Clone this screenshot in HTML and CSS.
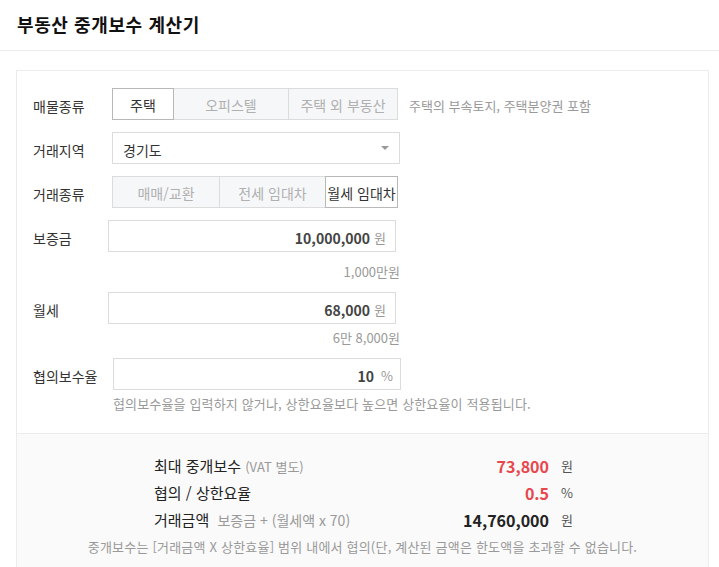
FILE: index.html
```html
<!DOCTYPE html>
<html lang="ko">
<head>
  <meta charset="UTF-8">
  <title>부동산 중개보수 계산기</title>
  <link rel="stylesheet" href="styles.css">
</head>
<body>
  <div class="header">
    <h1>부동산 중개보수 계산기</h1>
  </div>

  <div class="calc">
    <div class="form">

      <div class="row">
        <span class="label">매물종류</span>
        <div class="tabs">
          <button class="tab on" style="width:62px">주택</button>
          <button class="tab" style="width:116px">오피스텔</button>
          <button class="tab" style="width:110px">주택 외 부동산</button>
        </div>
        <span class="note">주택의 부속토지, 주택분양권 포함</span>
      </div>

      <div class="row">
        <span class="label">거래지역</span>
        <div class="select">
          <span>경기도</span>
          <i class="arrow"></i>
        </div>
      </div>

      <div class="row">
        <span class="label">거래종류</span>
        <div class="tabs">
          <button class="tab" style="width:108px">매매/교환</button>
          <button class="tab" style="width:107px">전세 임대차</button>
          <button class="tab on" style="width:73px">월세 임대차</button>
        </div>
      </div>

      <div class="row">
        <span class="label">보증금</span>
        <div class="input money">
          <b>10,000,000</b><span class="unit">원</span>
        </div>
      </div>
      <div class="hint">1,000만원</div>

      <div class="row row-next">
        <span class="label">월세</span>
        <div class="input money">
          <b>68,000</b><span class="unit">원</span>
        </div>
      </div>
      <div class="hint">6만 8,000원</div>

      <div class="row row-next">
        <span class="label">협의보수율</span>
        <div class="input rate">
          <b>10</b><span class="unit">%</span>
        </div>
      </div>
      <div class="help">협의보수율을 입력하지 않거나, 상한요율보다 높으면 상한요율이 적용됩니다.</div>

    </div>

    <div class="result">
      <div class="res-list">
        <div class="res-row">
          <span class="res-label">최대 중개보수 <small>(VAT 별도)</small></span>
          <b class="res-val red">73,800</b>
          <span class="res-unit">원</span>
        </div>
        <div class="res-row">
          <span class="res-label">협의 / 상한요율</span>
          <b class="res-val red">0.5</b>
          <span class="res-unit">%</span>
        </div>
        <div class="res-row">
          <span class="res-label">거래금액 <small class="formula">보증금 + (월세액 x 70)</small></span>
          <b class="res-val">14,760,000</b>
          <span class="res-unit">원</span>
        </div>
      </div>
      <p class="foot">중개보수는 [거래금액 X 상한효율] 범위 내에서 협의(단, 계산된 금액은 한도액을 초과할 수 없습니다.</p>
    </div>
  </div>
</body>
</html>
```

FILE: styles.css
```css
html { overflow: hidden; }

body {
  margin: 0;
  background: #fff;
  color: #333;
  font-family: "Noto Sans CJK KR", "Noto Sans", sans-serif;
}

.header
{
  height: 51px;
  padding: 0 17px 3px;
  box-sizing: border-box;
  display: flex;
  align-items: center;
  border-bottom: 1px solid #ececec;
}

.header h1
{
  margin: 0;
  font-size: 18px;
  font-weight: bold;
  letter-spacing: 0.6px;
  color: #111;
}

.calc
{
  margin: 19px 10px 0 16px;
  border: 1px solid #ececec;
}

.form
{
  padding: 17px 16px 21px;
}

.row
{
  display: flex;
  align-items: center;
  height: 32px;
  margin-bottom: 12px;
}
.row-next { margin-top: 12px; margin-bottom: 0; }

.label
{
  width: 75px;
  flex: none;
  padding-top: 4px;
  font-size: 14px;
  color: #333;
}

/* button groups */
.tabs
{
  display: flex;
  margin-left: 4px;
  height: 32px;
}

.tab
{
  height: 32px;
  padding: 2px 0 0;
  margin: 0 0 0 -1px;
  border: 1px solid #dcdcdc;
  background: #f6f7f9;
  color: #b0b0b0;
  font-family: inherit;
  font-size: 14px;
  white-space: nowrap;
  display: flex;
  align-items: center;
  justify-content: center;
  overflow: visible;
}
.tab:first-child { margin-left: 0; }
.tab.on
{
  background: #fff;
  color: #333;
  border-color: #b8b8b8;
  position: relative; /* keep active border on top */
}

.note
{
  margin-left: 11px;
  padding-top: 2px;
  font-size: 13px;
  color: #999;
}

.select
{
  margin-left: 4px;
  width: 288px;
  height: 32px;
  box-sizing: border-box;
  border: 1px solid #dcdcdc;
  display: flex;
  align-items: center;
  justify-content: space-between;
  padding: 3px 10px 0 10px;
  font-size: 14px;
  color: #333;
}

.arrow
{
  width: 0;
  height: 0;
  margin-top: -3px;
  border-left: 4px solid transparent;
  border-right: 4px solid transparent;
  border-top: 4px solid #999;
}

.input
{
  width: 288px;
  height: 32px;
  box-sizing: border-box;
  border: 1px solid #dcdcdc;
  display: flex;
  align-items: center;
  justify-content: flex-end;
  padding: 3px 9px 0 0;
}
.input b { font-size: 14px; color: #444; }
.input .unit { font-size: 13px; color: #999; margin-left: 4px; }
.rate { margin-left: 5px; padding-right: 7px; }
.rate .unit { margin-left: 7px; }

.hint
{
  width: 367px;
  margin-top: 6px;
  line-height: 16px;
  text-align: right;
  font-size: 13px;
  color: #999;
}

.help
{
  margin-top: 6px;
  padding-left: 80px;
  line-height: 16px;
  font-size: 13px;
  letter-spacing: 0.15px;
  color: #999;
}

/* results */
.result
{
  background: #fafafa;
  border-top: 1px solid #ececec;
  padding: 18px 0 14px;
}

.res-list
{
  margin-left: 137px;
  width: 419px;
}

.res-row
{
  display: flex;
  align-items: center;
  height: 27px;
}

.res-label
{
  flex: 1;
  font-size: 15px;
  color: #222;
}
.res-label small { font-size: 13px; color: #999; }
.res-label .formula { font-size: 14px; margin-left: 4px; }

.res-val
{
  font-size: 16px;
  color: #222;
}
.res-val.red { color: #e8474d; }

.res-unit
{
  width: 12px;
  margin-left: 12px;
  font-size: 13px;
  color: #555;
}

.foot
{
  margin: 6px 0 0;
  line-height: 16px;
  text-align: center;
  font-size: 13px;
  letter-spacing: 0.2px;
  color: #999;
}
```
